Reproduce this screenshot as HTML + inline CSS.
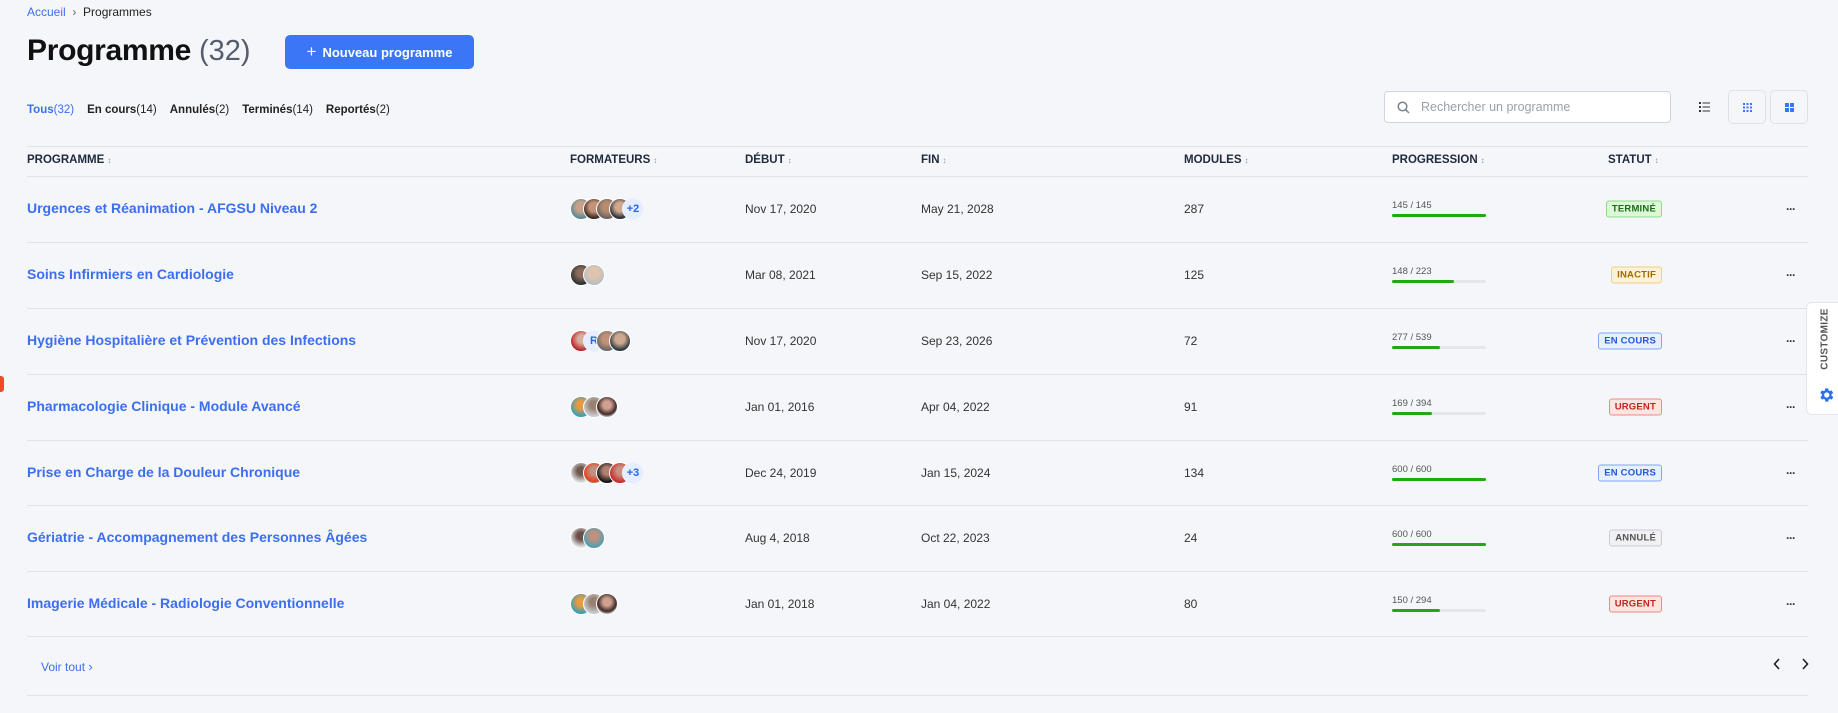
<!DOCTYPE html>
<html><head><meta charset="utf-8">
<style>
*{box-sizing:border-box;margin:0;padding:0}
body{width:1838px;height:713px;overflow:hidden;background:#f5f6fa;font-family:"Liberation Sans",sans-serif;position:relative;color:#1f2937}
.a{position:absolute}
.crumb{left:27px;top:5px;font-size:12px;color:#222}
.crumb span{color:#3b6ff0}
h1{position:absolute;left:27px;top:34px;font-size:30px;font-weight:700;color:#111;letter-spacing:-0.3px}
.cnt{left:199px;top:35px;font-size:29px;color:#555e6e}
.btn{left:285px;top:35px;width:189px;height:34px;background:#3b76f6;border-radius:5px;color:#fff;font-size:13px;font-weight:700;text-align:center;line-height:34px}
.tabs{left:27px;top:104px;font-size:11.5px;color:#222;font-weight:600}
.tabs b{font-weight:600;margin-right:13px}
.tabs i{font-style:normal;font-weight:400}
.search{left:1384px;top:91px;width:287px;height:32px;background:#fff;border:1px solid #cfd4dd;border-radius:4px;font-size:12.5px;color:#9aa1ad;line-height:30px;padding-left:36px}
.vb{top:90px;width:38px;height:34px;border:1px solid #dde1e8;border-radius:5px}
.line{left:27px;width:1781px;height:1px;background:#dfe2e8}
.th{top:154px;font-size:11.5px;font-weight:700;color:#1e293b}
.th:after{content:"\2195";font-size:8px;color:#8a94a4;margin-left:3px}
.row{position:absolute;left:0;width:1838px;height:66px}
.row>div{position:absolute;top:50%;transform:translateY(-50%)}
.name{left:27px;font-size:14px;font-weight:600;color:#3b6ff0;margin-top:-1px}
.dt{font-size:12px;color:#333}
.av{left:570px;height:22px;width:100px}
.av i{position:absolute;top:0;width:22px;height:22px;border-radius:50%;border:1px solid #fff}
.av i.t{background:#e6edff;color:#2563eb;font-style:normal;font-weight:700;font-size:11px;text-align:center;line-height:20px;border-color:#eef2ff}
.pg{left:1392px;width:94px;height:24px}
.pg span{position:absolute;top:3px;left:0;font-size:9.5px;color:#555}
.pg em{position:absolute;top:17px;left:0;width:94px;height:3px;background:#e4e6ec;border-radius:2px}
.pg em b{display:block;height:3px;background:#22a815;border-radius:2px}
.bd{right:176px;font-size:9.5px;font-weight:700;padding:2px 5px;border:1px solid;border-radius:3px;letter-spacing:.2px}
.ok{background:#dcf8d6;border-color:#8fd98a;color:#1d6b1a}
.in{background:#fdf1d6;border-color:#f1cf85;color:#a36a00}
.ec{background:#e8f0ff;border-color:#7fa6f5;color:#2257d6}
.ur{background:#fde3e1;border-color:#f08a80;color:#c0261c}
.an{background:#f1f1f3;border-color:#c9ccd2;color:#555}
.dots{left:1786px;font-size:12px;font-weight:700;color:#333;letter-spacing:-1px}
</style></head><body>
<div class="a crumb"><span>Accueil</span> &nbsp;<span style="color:#666">›</span>&nbsp; Programmes</div>
<h1>Programme</h1>
<div class="a cnt">(32)</div>
<div class="a btn"><span style="font-size:17px;font-weight:400;margin-right:6px">+</span>Nouveau programme</div>
<div class="a tabs" style="top:104px"><b style="color:#3b6ff0">Tous<i>(32)</i></b><b>En cours<i>(14)</i></b><b>Annulés<i>(2)</i></b><b>Terminés<i>(14)</i></b><b>Reportés<i>(2)</i></b></div>
<div class="a search">Rechercher un programme
<svg class="a" style="left:12px;top:9px" width="13" height="13" viewBox="0 0 13 13"><circle cx="5.5" cy="5.5" r="4.3" fill="none" stroke="#7a8290" stroke-width="1.5"/><path d="M8.7 8.7L12 12" stroke="#7a8290" stroke-width="1.5"/></svg></div>
<svg class="a" style="left:1699px;top:102px" width="11" height="10" viewBox="0 0 11 10"><g fill="#333"><rect x="0" y="0" width="2" height="2"/><rect x="0" y="4" width="2" height="2"/><rect x="0" y="8" width="2" height="2"/><rect x="3.5" y="0.5" width="7.5" height="1"/><rect x="3.5" y="4.5" width="7.5" height="1"/><rect x="3.5" y="8.5" width="7.5" height="1"/></g></svg>
<div class="a vb" style="left:1728px"><svg class="a" style="left:14px;top:12px" width="9" height="9" viewBox="0 0 9 9"><g fill="#3b76f6"><rect x="0" y="0" width="2" height="2"/><rect x="3.5" y="0" width="2" height="2"/><rect x="7" y="0" width="2" height="2"/><rect x="0" y="3.5" width="2" height="2"/><rect x="3.5" y="3.5" width="2" height="2"/><rect x="7" y="3.5" width="2" height="2"/><rect x="0" y="7" width="2" height="2"/><rect x="3.5" y="7" width="2" height="2"/><rect x="7" y="7" width="2" height="2"/></g></svg></div>
<div class="a vb" style="left:1770px"><svg class="a" style="left:14px;top:12px" width="9" height="9" viewBox="0 0 9 9"><g fill="#3b76f6"><rect x="0" y="0" width="4" height="4"/><rect x="5" y="0" width="4" height="4"/><rect x="0" y="5" width="4" height="4"/><rect x="5" y="5" width="4" height="4"/></g></svg></div>

<div class="a line" style="top:146px"></div>
<div class="a th" style="left:27px">PROGRAMME</div>
<div class="a th" style="left:570px">FORMATEURS</div>
<div class="a th" style="left:745px">DÉBUT</div>
<div class="a th" style="left:921px">FIN</div>
<div class="a th" style="left:1184px">MODULES</div>
<div class="a th" style="left:1392px">PROGRESSION</div>
<div class="a th" style="left:1608px">STATUT</div>
<div class="a line" style="top:176px"></div>

<div class="row" style="top:176px"><div class="name">Urgences et Réanimation - AFGSU Niveau 2</div>
<div class="av"><i style="left:0;background:radial-gradient(circle at 50% 40%,#c9a18a 30%,#5a8a94 70%)"></i><i style="left:13px;background:radial-gradient(circle at 50% 40%,#c59278 30%,#3a2a22 70%)"></i><i style="left:26px;background:radial-gradient(circle at 50% 40%,#b88a70 30%,#6b6460 70%)"></i><i style="left:39px;background:radial-gradient(circle at 50% 40%,#d0a890 30%,#2a3038 70%)"></i><i class="t" style="left:52px">+2</i></div>
<div class="dt" style="left:745px">Nov 17, 2020</div><div class="dt" style="left:921px">May 21, 2028</div><div class="dt" style="left:1184px">287</div>
<div class="pg"><span>145 / 145</span><em><b style="width:100%"></b></em></div><div class="bd ok">TERMINÉ</div><div class="dots">···</div></div>
<div class="a line" style="top:242px"></div>

<div class="row" style="top:242px"><div class="name">Soins Infirmiers en Cardiologie</div>
<div class="av"><i style="left:0;background:radial-gradient(circle at 50% 40%,#8a6a5a 25%,#2d3430 70%)"></i><i style="left:13px;background:radial-gradient(circle at 50% 40%,#e0c4ae 30%,#b9bec4 70%)"></i></div>
<div class="dt" style="left:745px">Mar 08, 2021</div><div class="dt" style="left:921px">Sep 15, 2022</div><div class="dt" style="left:1184px">125</div>
<div class="pg"><span>148 / 223</span><em><b style="width:66%"></b></em></div><div class="bd in">INACTIF</div><div class="dots">···</div></div>
<div class="a line" style="top:308px"></div>

<div class="row" style="top:308px"><div class="name">Hygiène Hospitalière et Prévention des Infections</div>
<div class="av"><i style="left:0;background:radial-gradient(circle at 55% 40%,#d8b0a0 25%,#b8262a 70%)"></i><i class="t" style="left:13px">R</i><i style="left:26px;background:radial-gradient(circle at 50% 40%,#c09078 30%,#6b6a68 70%)"></i><i style="left:39px;background:radial-gradient(circle at 50% 40%,#d0a890 30%,#2a3840 70%)"></i></div>
<div class="dt" style="left:745px">Nov 17, 2020</div><div class="dt" style="left:921px">Sep 23, 2026</div><div class="dt" style="left:1184px">72</div>
<div class="pg"><span>277 / 539</span><em><b style="width:51%"></b></em></div><div class="bd ec">EN COURS</div><div class="dots">···</div></div>
<div class="a line" style="top:374px"></div>

<div class="row" style="top:374px"><div class="name">Pharmacologie Clinique - Module Avancé</div>
<div class="av"><i style="left:0;background:radial-gradient(circle at 50% 40%,#e89a40 25%,#3aa0b8 70%)"></i><i style="left:13px;background:radial-gradient(circle at 50% 40%,#9a8070 25%,#c8ccd0 70%)"></i><i style="left:26px;background:radial-gradient(circle at 50% 40%,#d0a090 25%,#402a28 60%,#e0e0e0 80%)"></i></div>
<div class="dt" style="left:745px">Jan 01, 2016</div><div class="dt" style="left:921px">Apr 04, 2022</div><div class="dt" style="left:1184px">91</div>
<div class="pg"><span>169 / 394</span><em><b style="width:43%"></b></em></div><div class="bd ur">URGENT</div><div class="dots">···</div></div>
<div class="a line" style="top:440px"></div>

<div class="row" style="top:440px"><div class="name">Prise en Charge de la Douleur Chronique</div>
<div class="av"><i style="left:0;background:radial-gradient(circle at 50% 40%,#705a50 25%,#dde0e2 70%)"></i><i style="left:13px;background:radial-gradient(circle at 50% 40%,#c09080 25%,#e84020 65%,#8a9a80 80%)"></i><i style="left:26px;background:radial-gradient(circle at 50% 40%,#b08070 25%,#141414 70%)"></i><i style="left:39px;background:radial-gradient(circle at 55% 40%,#c89080 25%,#c82a2a 70%)"></i><i class="t" style="left:52px">+3</i></div>
<div class="dt" style="left:745px">Dec 24, 2019</div><div class="dt" style="left:921px">Jan 15, 2024</div><div class="dt" style="left:1184px">134</div>
<div class="pg"><span>600 / 600</span><em><b style="width:100%"></b></em></div><div class="bd ec">EN COURS</div><div class="dots">···</div></div>
<div class="a line" style="top:505px"></div>

<div class="row" style="top:505px"><div class="name">Gériatrie - Accompagnement des Personnes Âgées</div>
<div class="av"><i style="left:0;background:radial-gradient(circle at 50% 40%,#6a5048 25%,#e4e4e6 70%)"></i><i style="left:13px;background:radial-gradient(circle at 50% 40%,#c09080 25%,#50a0b0 70%)"></i></div>
<div class="dt" style="left:745px">Aug 4, 2018</div><div class="dt" style="left:921px">Oct 22, 2023</div><div class="dt" style="left:1184px">24</div>
<div class="pg"><span>600 / 600</span><em><b style="width:100%"></b></em></div><div class="bd an">ANNULÉ</div><div class="dots">···</div></div>
<div class="a line" style="top:571px"></div>

<div class="row" style="top:571px"><div class="name">Imagerie Médicale - Radiologie Conventionnelle</div>
<div class="av"><i style="left:0;background:radial-gradient(circle at 50% 40%,#e89a40 25%,#3aa0b8 70%)"></i><i style="left:13px;background:radial-gradient(circle at 50% 40%,#9a8070 25%,#c8ccd0 70%)"></i><i style="left:26px;background:radial-gradient(circle at 50% 40%,#d0a090 25%,#402a28 60%,#e0e0e0 80%)"></i></div>
<div class="dt" style="left:745px">Jan 01, 2018</div><div class="dt" style="left:921px">Jan 04, 2022</div><div class="dt" style="left:1184px">80</div>
<div class="pg"><span>150 / 294</span><em><b style="width:51%"></b></em></div><div class="bd ur">URGENT</div><div class="dots">···</div></div>
<div class="a line" style="top:636px"></div>

<div class="a" style="left:41px;top:659px;font-size:12px;color:#3b6ff0">Voir tout <span style="font-size:13px">›</span></div>
<svg class="a" style="left:1773px;top:658px" width="8" height="12" viewBox="0 0 8 12"><path d="M6 1L1.5 6L6 11" fill="none" stroke="#222" stroke-width="1.6"/></svg>
<svg class="a" style="left:1801px;top:658px" width="8" height="12" viewBox="0 0 8 12"><path d="M2 1L6.5 6L2 11" fill="none" stroke="#222" stroke-width="1.6"/></svg>
<div class="a line" style="top:695px"></div>

<div class="a" style="left:0;top:376px;width:4px;height:16px;background:#f04a2a;border-radius:0 3px 3px 0"></div>
<div class="a" style="left:1806px;top:302px;width:36px;height:113px;background:#fff;border:1px solid #e2e5ea;border-radius:6px 0 0 6px">
<div class="a" style="transform:translate(-50%,-50%) rotate(-90deg);transform-origin:center;font-size:10px;font-weight:700;color:#555;letter-spacing:.3px;white-space:nowrap;left:18px;top:36px">CUSTOMIZE</div>
<svg class="a" style="left:10px;top:83px" width="18" height="18" viewBox="0 0 24 24"><path fill="#2b72e6" d="M19.4 13a7.5 7.5 0 000-2l2.1-1.6-2-3.5-2.5 1a7.6 7.6 0 00-1.7-1L15 3.2h-4l-.4 2.7a7.6 7.6 0 00-1.7 1l-2.5-1-2 3.5L6.6 11a7.5 7.5 0 000 2l-2.1 1.6 2 3.5 2.5-1c.5.4 1.1.7 1.7 1l.4 2.7h4l.4-2.7c.6-.3 1.2-.6 1.7-1l2.5 1 2-3.5zM13 15.5a3.5 3.5 0 110-7 3.5 3.5 0 010 7z"/></svg>
</div>
</body></html>
